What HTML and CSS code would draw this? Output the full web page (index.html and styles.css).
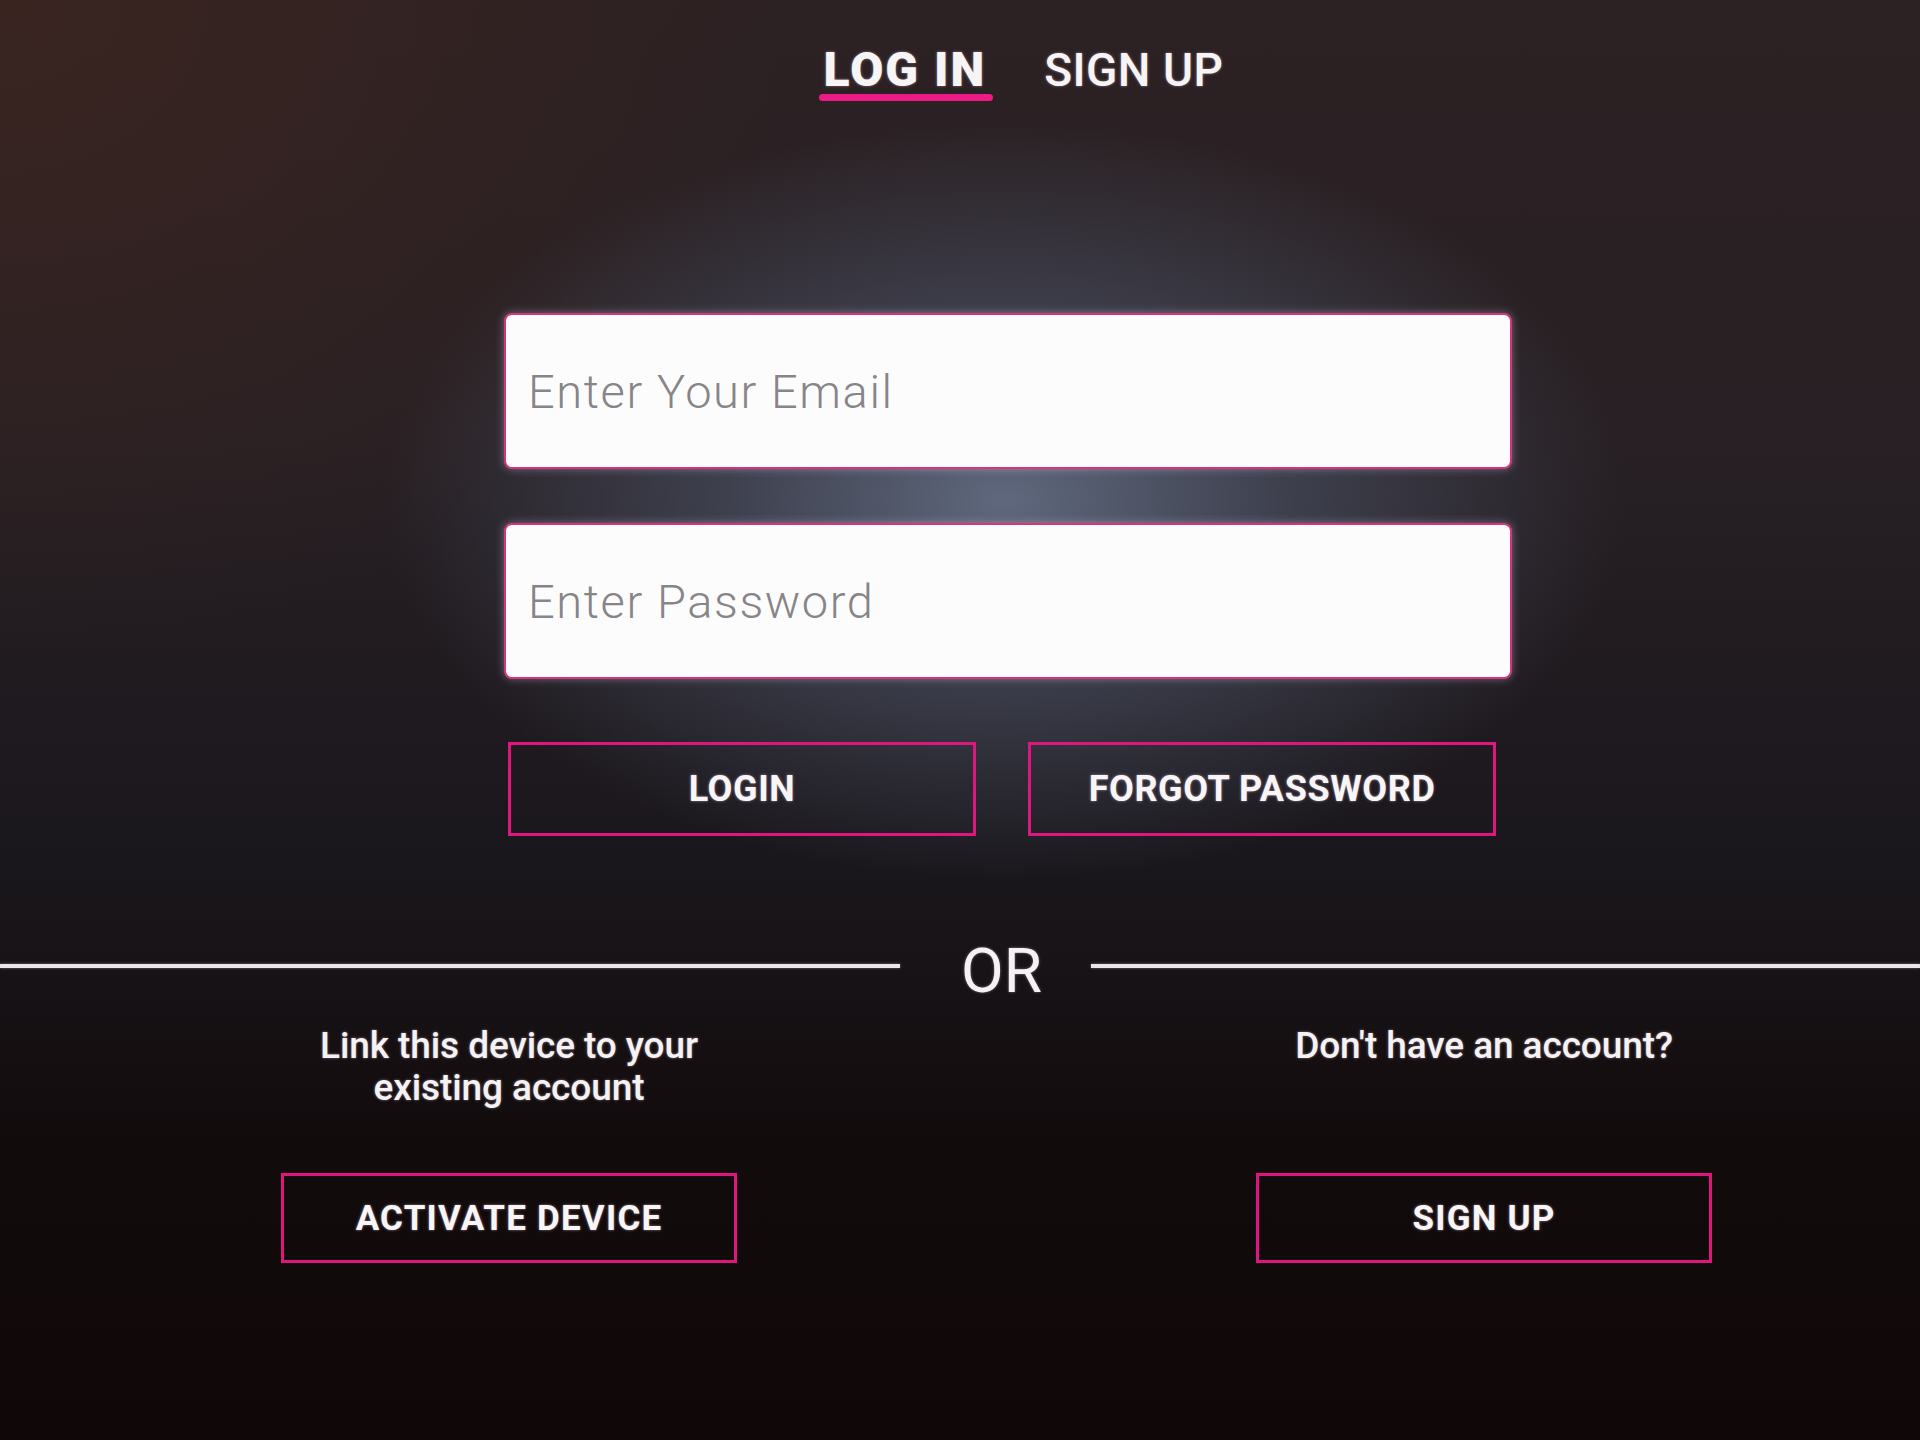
FILE: index.html
```html
<!DOCTYPE html>
<html lang="en">
<head>
    <meta charset="UTF-8">
    <meta name="viewport" content="width=device-width, initial-scale=1.0">
    <title>Log In</title>
    <link rel="stylesheet" href="styles.css">
</head>
<body>
    <div class="screen">
        <nav class="tabs">
            <a class="tab active" href="#">LOG IN</a>
            <a class="tab" href="#">SIGN UP</a>
        </nav>

        <form class="login">
            <input class="field" type="email" placeholder="Enter Your Email">
            <input class="field" type="password" placeholder="Enter Password">
            <div class="actions">
                <button class="btn" type="button">LOGIN</button>
                <button class="btn" type="button">FORGOT PASSWORD</button>
            </div>
        </form>

        <div class="divider">
            <span class="line line-left"></span>
            <span class="or">OR</span>
            <span class="line"></span>
        </div>

        <div class="alt">
            <p class="alt-text">Link this device to your<br>existing account</p>
            <p class="alt-text">Don't have an account?</p>
            <button class="btn btn-small" type="button">ACTIVATE DEVICE</button>
            <button class="btn btn-small" type="button">SIGN UP</button>
        </div>
    </div>
</body>
</html>
```

FILE: styles.css
```css
* {
    margin: 0;
    padding: 0;
    box-sizing: border-box;
}
body {
    font-family: 'Roboto', 'Liberation Sans', sans-serif;
    color: #f4f2f2;
    width: 1920px;
    height: 1440px;
    overflow: hidden;
    background:
        radial-gradient(ellipse 620px 380px at 1005px 500px, rgba(98, 108, 130, 0.95) 0%, rgba(72, 78, 96, 0.7) 45%, rgba(45, 42, 50, 0) 100%),
        radial-gradient(ellipse 800px 650px at 0 0, rgba(60, 37, 32, 0.85), rgba(60, 37, 32, 0) 100%),
        linear-gradient(to bottom, #2c2123 0%, #282024 30%, #1a171c 60%, #120b0c 80%, #100808 100%);
}
.screen {
    width: 1920px;
    height: 1440px;
}

/* tabs */
.tabs {
    display: flex;
    justify-content: center;
    align-items: flex-start;
    gap: 58px;
    padding: 46px 0 0 127px;
}
.tab {
    color: #f6f4f4;
    text-decoration: none;
    font-size: 46px;
    line-height: 48px;
    font-weight: 500;
    letter-spacing: 0.5px;
    text-shadow: 0 0 3px rgba(255, 220, 255, 0.45);
}
.tab.active {
    font-size: 48px;
    font-weight: 900;
    letter-spacing: 2px;
}
.tab.active::after {
    content: '';
    display: block;
    height: 7px;
    margin: 0 -7px 0 -5px;
    background: #ec1a86;
    border-radius: 4px;
}

/* form */
.login {
    width: 1008px;
    margin: 212px 0 0 504px;
    display: flex;
    flex-direction: column;
    gap: 54px;
}
.field {
    height: 156px;
    width: 100%;
    border: 2px solid #d8337f;
    border-radius: 8px;
    background: #fdfcfd;
    padding: 0 22px;
    font-family: 'Roboto', 'Liberation Sans', sans-serif;
    font-size: 47px;
    font-weight: 300;
    letter-spacing: 1.6px;
    color: #555;
    outline: none;
    box-shadow: 0 0 8px rgba(255, 230, 255, 0.35);
}
.field::placeholder {
    color: #878588;
}
.actions {
    display: flex;
    gap: 52px;
    padding-left: 4px;
    margin-top: 9px;
}
.btn {
    width: 468px;
    height: 94px;
    background: transparent;
    border: 3px solid #e0167f;
    color: #f7f5f5;
    font-family: 'Roboto', 'Liberation Sans', sans-serif;
    font-size: 36px;
    font-weight: 700;
    letter-spacing: 0.6px;
    text-shadow: 0 0 3px rgba(255, 220, 255, 0.5);
    cursor: pointer;
}

/* divider */
.divider {
    display: flex;
    align-items: flex-start;
    margin-top: 104px;
}
.line {
    flex: 1;
    height: 4px;
    margin-top: 24px;
    background: #e9e7e8;
    box-shadow: 0 0 3px rgba(255, 255, 255, 0.4);
}
.line-left {
    flex: 0 0 900px;
}
.or {
    font-size: 62px;
    line-height: 62px;
    font-weight: 400;
    margin: 0 49px 0 61px;
    text-shadow: 0 0 3px rgba(255, 220, 255, 0.45);
}

/* alternative actions */
.alt {
    display: grid;
    grid-template-columns: 456px 456px;
    column-gap: 519px;
    row-gap: 64px;
    justify-content: center;
    justify-items: center;
    align-items: start;
    padding-left: 73px;
    margin-top: 23px;
}
.alt-text {
    font-size: 37px;
    line-height: 42px;
    font-weight: 500;
    letter-spacing: -0.1px;
    text-align: center;
    white-space: nowrap;
    text-shadow: 0 0 3px rgba(255, 220, 255, 0.45);
}
.btn-small {
    width: 456px;
    height: 90px;
    font-size: 35px;
    letter-spacing: 1.2px;
}
```
